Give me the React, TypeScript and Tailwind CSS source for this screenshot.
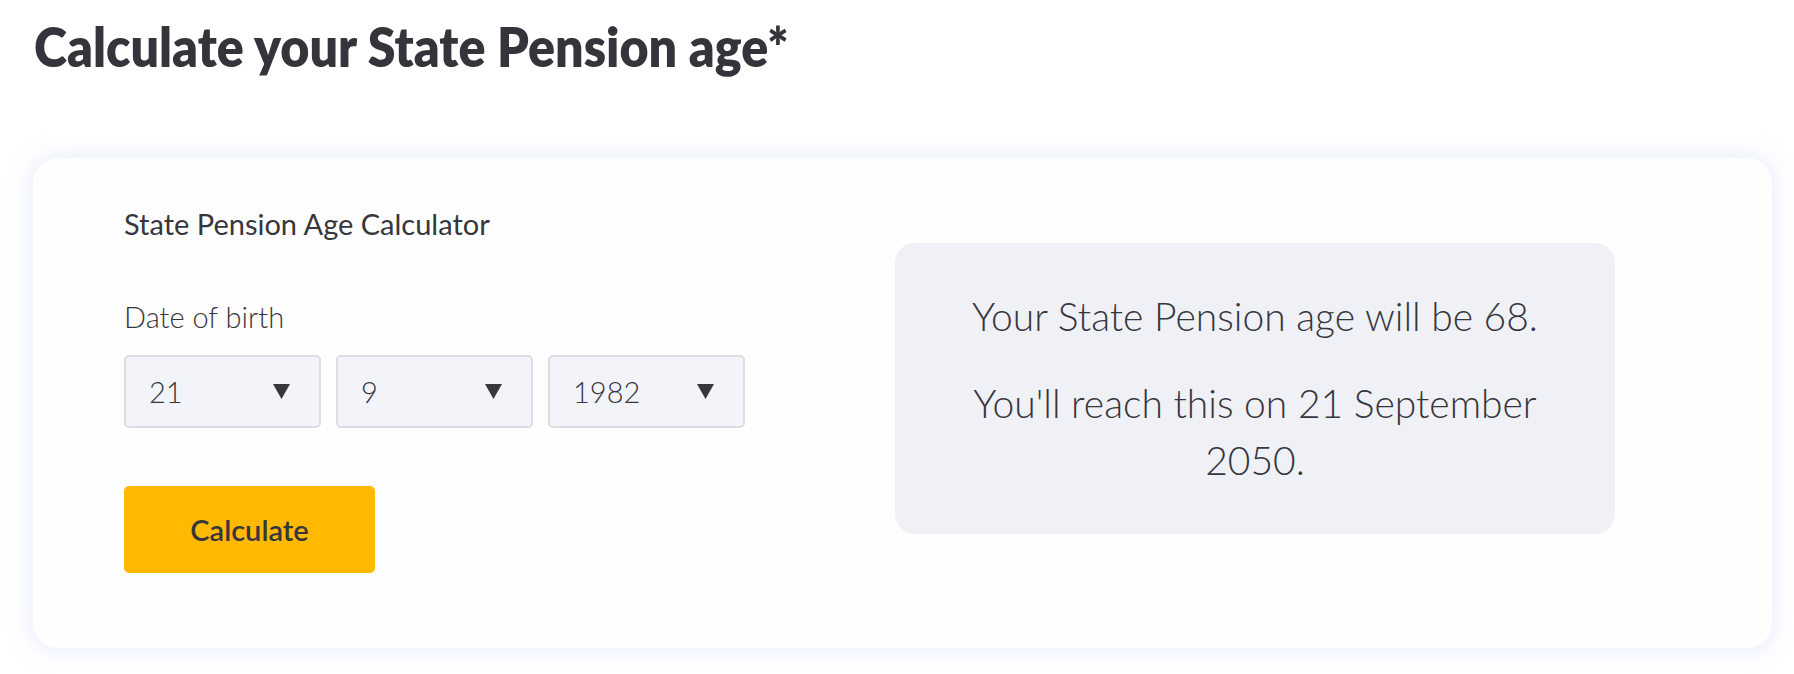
import React from "react";

function Arrow() {
  return (
    <svg width="17" height="15" viewBox="0 0 17 15" className="shrink-0">
      <polygon points="0,0 17,0 8.5,15" fill="#36363d" />
    </svg>
  );
}

function FakeSelect({ value }: { value: string }) {
  return (
    <div className="flex h-[73px] w-[197px] items-center justify-between rounded-[5px] border-2 border-[#dcdde3] bg-[#f3f4f9] pl-[23px] pr-[29px]">
      <span className="text-[29px] font-light leading-none text-[#36363d]">{value}</span>
      <Arrow />
    </div>
  );
}

export default function App() {
  return (
    <div className="min-h-[674px] w-full bg-white pb-[26px] font-['Lato',sans-serif] text-[#36363d]">
      <h1 className="whitespace-nowrap pl-[34px] pt-[20px] text-[54px] font-extrabold leading-none text-[#34343b]">
        <span className="inline-block origin-left scale-x-[0.93]">Calculate your State Pension age*</span>
      </h1>
      <div className="ml-[33px] mr-[22px] mt-[84px] flex h-[490px] items-start rounded-[25px] bg-[#fefefe] pl-[91px] pr-[157px] pt-[51px] shadow-[0_0_18px_6px_rgba(225,231,252,0.55)]">
        <div className="flex flex-col">
          <p className="text-[29px] leading-none">State Pension Age Calculator</p>
          <p className="mt-[64px] text-[29px] font-light leading-none">Date of birth</p>
          <div className="mt-[24px] flex gap-[15px]">
            <FakeSelect value="21" />
            <FakeSelect value="9" />
            <FakeSelect value="1982" />
          </div>
          <button className="mt-[58px] flex h-[87px] w-[251px] items-center justify-center rounded-[5px] bg-[#ffb900] text-[29px] font-semibold leading-none text-[#36363d]">
            Calculate
          </button>
        </div>
        <div className="ml-auto mt-[34px] flex h-[291px] w-[720px] flex-col justify-center rounded-[20px] bg-[#f0f1f6] px-[60px] text-center text-[39px] font-light leading-[57px]">
          <p>Your State Pension age will be 68.</p>
          <p className="mt-[30px]">You'll reach this on 21 September 2050.</p>
        </div>
      </div>
    </div>
  );
}
